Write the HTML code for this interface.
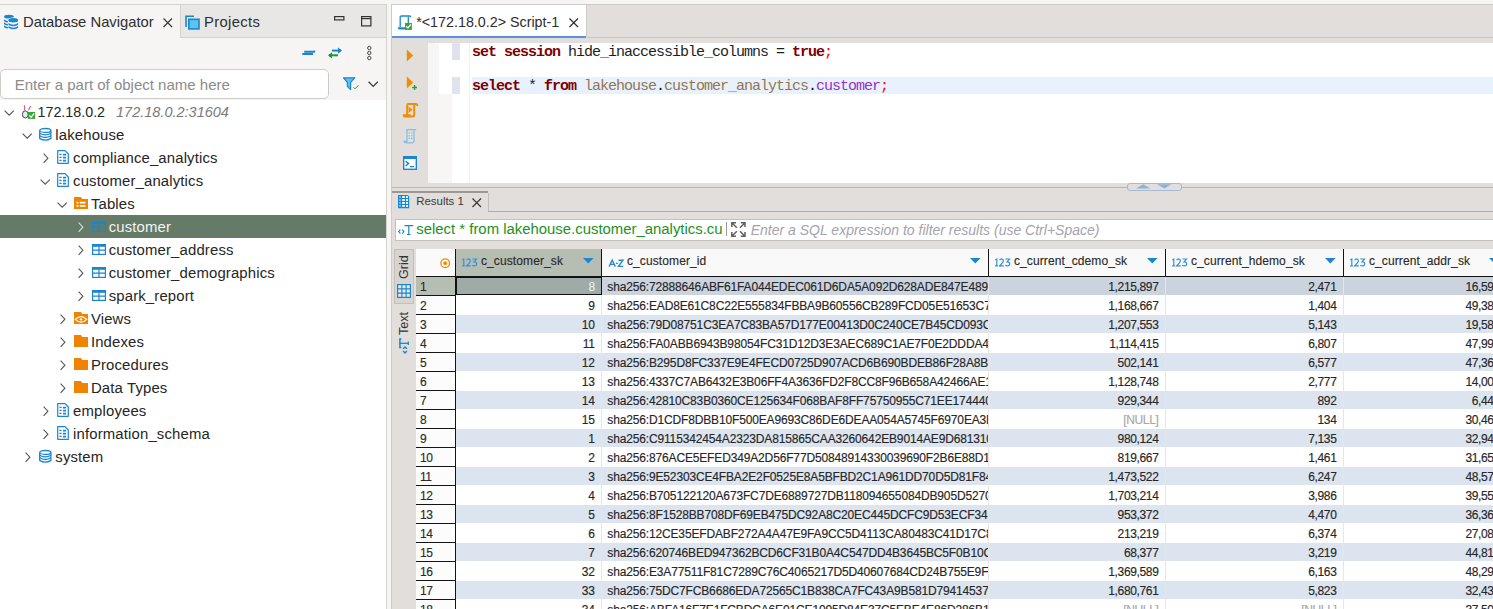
<!DOCTYPE html>
<html><head><meta charset="utf-8">
<style>
*{margin:0;padding:0;box-sizing:border-box}
html,body{width:1493px;height:609px;overflow:hidden;background:#f6f5f4;font-family:"Liberation Sans",sans-serif;color:#2e2e2e;position:relative}
.a{position:absolute}
.t{position:absolute;white-space:pre;line-height:1}
svg{position:absolute;overflow:visible}
.clip{position:absolute;overflow:hidden}
</style></head><body>
<div class="a" style="left:0px;top:0px;width:1493px;height:4px;background:#f6f5f4;"></div>
<div class="a" style="left:0px;top:4px;width:387px;height:1px;background:#d6d2ce;"></div>
<div class="a" style="left:180px;top:5px;width:206px;height:32px;background:#e9e7e5;border-left:1px solid #d6d2ce"></div>
<div class="a" style="left:180px;top:37px;width:206px;height:1px;background:#d6d2ce;"></div>
<div class="a" style="left:386px;top:4px;width:1px;height:605px;background:#d6d2ce;"></div>
<div class="a" style="left:387px;top:0px;width:4px;height:609px;background:#f6f5f4;"></div>
<svg style="left:2px;top:12px;" width="20" height="20" viewBox="0 0 20 20"><g fill="#1a86d0">
<ellipse cx="6.9" cy="4.7" rx="4.9" ry="1.9"/>
<path d="M2 7.6Q4 9 6 9.2V10.6Q4 10.4 2 9.2z"/>
<path d="M2 10.6Q4 12 6 12.2V13.6Q4 13.4 2 12.2z"/>
<path d="M2 13.6Q4 15 6 15.2V16.6Q4 16.4 2 15.2z"/>
</g>
<ellipse cx="11.25" cy="8.3" rx="5.6" ry="2.9" fill="#fff"/>
<ellipse cx="11.25" cy="8.3" rx="4.85" ry="2.2" fill="#1a86d0"/>
<path d="M6.4 11.1Q11.25 14.3 16.1 11.1V12.7Q11.25 15.9 6.4 12.7z" fill="#1a86d0"/>
<path d="M6.4 14.1Q11.25 17.3 16.1 14.1V15.7Q11.25 18.9 6.4 15.7z" fill="#1a86d0"/></svg>
<div class="t" style="left:23px;top:14.77px;font-size:14.8px;color:#2e2e2e;font-family:'Liberation Sans',sans-serif;">Database Navigator</div>
<svg style="left:163px;top:18px;" width="10" height="10" viewBox="0 0 10 10"><path d="M0.5 0.5L9 9M9 0.5L0.5 9" stroke="#3a3a3a" stroke-width="1.2"/></svg>
<svg style="left:185px;top:15px;" width="15" height="15" viewBox="0 0 15 15"><path d="M1 12V1.2H9" stroke="#1a86d0" stroke-width="1.6" fill="none"/>
<rect x="3.8" y="4.3" width="10.2" height="9.6" fill="#5ec2ea" stroke="#1a86d0" stroke-width="1.6"/></svg>
<div class="t" style="left:204px;top:14.77px;font-size:14.8px;color:#2e2e2e;font-family:'Liberation Sans',sans-serif;letter-spacing:0.35px">Projects</div>
<svg style="left:334px;top:16px;" width="11" height="5" viewBox="0 0 11 5"><rect x="0.6" y="0.6" width="9.3" height="3.3" fill="none" stroke="#333" stroke-width="1.2"/></svg>
<svg style="left:361px;top:16px;" width="11" height="11" viewBox="0 0 11 11"><rect x="0.6" y="0.6" width="9.3" height="9.3" fill="none" stroke="#333" stroke-width="1.2"/><path d="M0.6 2.6H9.9" stroke="#333" stroke-width="1.2"/></svg>
<svg style="left:302px;top:50px;" width="14" height="6" viewBox="0 0 14 6"><path d="M0.3 4H11M2.2 1.8H12.6" stroke="#1a86d0" stroke-width="1.9"/><path d="M12.6 0.6V2.4" stroke="#1a86d0" stroke-width="1.3"/></svg>
<svg style="left:327px;top:47px;" width="16" height="12" viewBox="0 0 16 12"><path d="M5 3.6H14" stroke="#1a86d0" stroke-width="2"/><path d="M11 0.5 L15 3.6 L11 6.7z" fill="#1a86d0"/>
<path d="M11 8.3H2" stroke="#10a02a" stroke-width="2"/><path d="M5 5.2 L1 8.3 L5 11.4z" fill="#10a02a"/></svg>
<svg style="left:366px;top:46px;" width="7" height="15" viewBox="0 0 7 15"><circle cx="3.3" cy="2" r="1.7" fill="none" stroke="#444" stroke-width="1"/><circle cx="3.3" cy="7" r="1.7" fill="none" stroke="#444" stroke-width="1"/><circle cx="3.3" cy="12" r="1.7" fill="none" stroke="#444" stroke-width="1"/></svg>
<div class="a" style="left:0px;top:69px;width:329px;height:30px;background:#ffffff;border:1px solid #cfccc8;border-radius:5px"></div>
<div class="t" style="left:14.7px;top:76.80px;font-size:15px;color:#8b8b8b;font-family:'Liberation Sans',sans-serif;">Enter a part of object name here</div>
<svg style="left:343px;top:77px;" width="17" height="14" viewBox="0 0 17 14"><path d="M0.5 0.8H11.8L7.6 5.4V12.6L4.4 9.4V5.4z" fill="#5ec2ea" stroke="#1a86d0" stroke-width="1.2" stroke-linejoin="round"/>
<path d="M10.5 10.3L12 11.8L15.5 8.2" stroke="#10a02a" stroke-width="1" fill="none"/></svg>
<svg style="left:368px;top:81px;" width="11" height="7" viewBox="0 0 11 7"><path d="M0.6 0.8L5.2 5.4L9.8 0.8" stroke="#3c3c3c" stroke-width="1.3" fill="none"/></svg>
<div class="a" style="left:0px;top:100px;width:386px;height:509px;background:#ffffff;"></div>
<div class="a" style="left:0px;top:215px;width:386px;height:23px;background:#657a67;"></div>
<svg style="left:4.0px;top:109.5px;" width="11" height="6" viewBox="0 0 11 6"><path d="M0.6 0.6L5.2 5.2L9.8 0.6" stroke="#555" stroke-width="1.1" fill="none"/></svg>
<svg style="left:22px;top:105px;" width="14" height="15" viewBox="0 0 14 15"><path d="M2.4 0.2L2.6 5.3M8.6 1L6.4 5.3" stroke="#e5539a" stroke-width="1.1"/>
<ellipse cx="3.3" cy="9.4" rx="2.9" ry="3.6" fill="#e6ecee" stroke="#444" stroke-width="1"/>
<rect x="5.9" y="6.9" width="7.2" height="7" fill="#3aa33a"/>
<path d="M7.3 10.4L9.2 12.2L12.2 8.4" stroke="#fff" stroke-width="1.3" fill="none"/></svg>
<div class="t" style="left:37.5px;top:105.30px;font-size:14.3px;color:#262626;font-family:'Liberation Sans',sans-serif;">172.18.0.2</div>
<div class="t" style="left:116px;top:105.13px;font-size:14.5px;color:#7a7a7a;font-family:'Liberation Sans',sans-serif;font-style:italic">172.18.0.2:31604</div>
<svg style="left:21.8px;top:132.5px;" width="11" height="6" viewBox="0 0 11 6"><path d="M0.6 0.6L5.2 5.2L9.8 0.6" stroke="#555" stroke-width="1.1" fill="none"/></svg>
<svg style="left:38.7px;top:128px;" width="13" height="13" viewBox="0 0 13 13"><g fill="none" stroke="#1a86d0" stroke-width="1.3">
<ellipse cx="6.3" cy="2.4" rx="5.6" ry="1.9"/>
<path d="M0.7 2.4V10.4Q6.3 13.9 11.9 10.4V2.4"/>
<path d="M0.7 5.2Q6.3 8.6 11.9 5.2M0.7 7.8Q6.3 11.2 11.9 7.8"/></g></svg>
<div class="t" style="left:55.3px;top:127.79px;font-size:14.9px;color:#262626;font-family:'Liberation Sans',sans-serif;letter-spacing:0.15px">lakehouse</div>
<svg style="left:42.5px;top:153px;" width="6" height="11" viewBox="0 0 6 11"><path d="M0.6 0.6L4.9 5.2L0.6 9.8" stroke="#555" stroke-width="1.1" fill="none"/></svg>
<svg style="left:57.0px;top:150px;" width="13" height="14" viewBox="0 0 13 14"><path d="M0.7 0.7H8L11.3 4V13.3H0.7z" fill="#fff" stroke="#1a86d0" stroke-width="1.2" stroke-linejoin="round"/>
<path d="M2.4 4.4H4.6M2.4 7.4H4.6M2.4 10.4H4.6" stroke="#1a86d0" stroke-width="1.1"/>
<path d="M6 4.6H9.1M6 7.6H9.1M6 10.6H9.1" stroke="#1a86d0" stroke-width="1.8"/></svg>
<div class="t" style="left:73.1px;top:150.79px;font-size:14.9px;color:#262626;font-family:'Liberation Sans',sans-serif;letter-spacing:0.15px">compliance_analytics</div>
<svg style="left:39.6px;top:178.5px;" width="11" height="6" viewBox="0 0 11 6"><path d="M0.6 0.6L5.2 5.2L9.8 0.6" stroke="#555" stroke-width="1.1" fill="none"/></svg>
<svg style="left:57.0px;top:173px;" width="13" height="14" viewBox="0 0 13 14"><path d="M0.7 0.7H8L11.3 4V13.3H0.7z" fill="#fff" stroke="#1a86d0" stroke-width="1.2" stroke-linejoin="round"/>
<path d="M2.4 4.4H4.6M2.4 7.4H4.6M2.4 10.4H4.6" stroke="#1a86d0" stroke-width="1.1"/>
<path d="M6 4.6H9.1M6 7.6H9.1M6 10.6H9.1" stroke="#1a86d0" stroke-width="1.8"/></svg>
<div class="t" style="left:73.1px;top:173.79px;font-size:14.9px;color:#262626;font-family:'Liberation Sans',sans-serif;letter-spacing:0.15px">customer_analytics</div>
<svg style="left:57.4px;top:201.5px;" width="11" height="6" viewBox="0 0 11 6"><path d="M0.6 0.6L5.2 5.2L9.8 0.6" stroke="#555" stroke-width="1.1" fill="none"/></svg>
<svg style="left:74px;top:197px;" width="14" height="12" viewBox="0 0 14 12"><path d="M0 0H6.8L8.4 2.1H14V12H0z" fill="#f08400"/><path d="M2.6 5.6H4.4M5.8 5.6H11.4M2.6 8.8H4.4M5.8 8.8H11.4" stroke="#fff" stroke-width="1.7"/></svg>
<div class="t" style="left:90.9px;top:196.79px;font-size:14.9px;color:#262626;font-family:'Liberation Sans',sans-serif;letter-spacing:0.15px">Tables</div>
<svg style="left:78.1px;top:222px;" width="6" height="11" viewBox="0 0 6 11"><path d="M0.6 0.6L4.9 5.2L0.6 9.8" stroke="#d8ddd8" stroke-width="1.1" fill="none"/></svg>
<svg style="left:92px;top:221px;" width="14" height="11" viewBox="0 0 14 11"><rect x="0.6" y="0.6" width="12.8" height="9.8" fill="none" stroke="#1a86d0" stroke-width="1.2"/>
<rect x="0.6" y="0.6" width="12.8" height="2.2" fill="#1a86d0"/>
<path d="M0.6 6.2H13.4M7 2.6V10.4" stroke="#1a86d0" stroke-width="1.2"/></svg>
<div class="t" style="left:108.7px;top:219.79px;font-size:14.9px;color:#f2f2f2;font-family:'Liberation Sans',sans-serif;letter-spacing:0.15px">customer</div>
<svg style="left:78.1px;top:245px;" width="6" height="11" viewBox="0 0 6 11"><path d="M0.6 0.6L4.9 5.2L0.6 9.8" stroke="#555" stroke-width="1.1" fill="none"/></svg>
<svg style="left:92px;top:244px;" width="14" height="11" viewBox="0 0 14 11"><rect x="0.6" y="0.6" width="12.8" height="9.8" fill="none" stroke="#1a86d0" stroke-width="1.2"/>
<rect x="0.6" y="0.6" width="12.8" height="2.2" fill="#1a86d0"/>
<path d="M0.6 6.2H13.4M7 2.6V10.4" stroke="#1a86d0" stroke-width="1.2"/></svg>
<div class="t" style="left:108.7px;top:242.79px;font-size:14.9px;color:#262626;font-family:'Liberation Sans',sans-serif;letter-spacing:0.15px">customer_address</div>
<svg style="left:78.1px;top:268px;" width="6" height="11" viewBox="0 0 6 11"><path d="M0.6 0.6L4.9 5.2L0.6 9.8" stroke="#555" stroke-width="1.1" fill="none"/></svg>
<svg style="left:92px;top:267px;" width="14" height="11" viewBox="0 0 14 11"><rect x="0.6" y="0.6" width="12.8" height="9.8" fill="none" stroke="#1a86d0" stroke-width="1.2"/>
<rect x="0.6" y="0.6" width="12.8" height="2.2" fill="#1a86d0"/>
<path d="M0.6 6.2H13.4M7 2.6V10.4" stroke="#1a86d0" stroke-width="1.2"/></svg>
<div class="t" style="left:108.7px;top:265.79px;font-size:14.9px;color:#262626;font-family:'Liberation Sans',sans-serif;letter-spacing:0.15px">customer_demographics</div>
<svg style="left:78.1px;top:291px;" width="6" height="11" viewBox="0 0 6 11"><path d="M0.6 0.6L4.9 5.2L0.6 9.8" stroke="#555" stroke-width="1.1" fill="none"/></svg>
<svg style="left:92px;top:290px;" width="14" height="11" viewBox="0 0 14 11"><rect x="0.6" y="0.6" width="12.8" height="9.8" fill="none" stroke="#1a86d0" stroke-width="1.2"/>
<rect x="0.6" y="0.6" width="12.8" height="2.2" fill="#1a86d0"/>
<path d="M0.6 6.2H13.4M7 2.6V10.4" stroke="#1a86d0" stroke-width="1.2"/></svg>
<div class="t" style="left:108.7px;top:288.79px;font-size:14.9px;color:#262626;font-family:'Liberation Sans',sans-serif;letter-spacing:0.15px">spark_report</div>
<svg style="left:60.3px;top:314px;" width="6" height="11" viewBox="0 0 6 11"><path d="M0.6 0.6L4.9 5.2L0.6 9.8" stroke="#555" stroke-width="1.1" fill="none"/></svg>
<svg style="left:74px;top:312px;" width="14" height="12" viewBox="0 0 14 12"><path d="M0 0H6.8L8.4 2.1H14V12H0z" fill="#f08400"/><path d="M1.3 7.4Q7 1.9 12.7 7.4Q7 12.9 1.3 7.4z" fill="none" stroke="#fff" stroke-width="1.3"/><path d="M7 5.6L7.6 6.8L8.8 7.4L7.6 8L7 9.2L6.4 8L5.2 7.4L6.4 6.8z" fill="#fff"/></svg>
<div class="t" style="left:90.9px;top:311.79px;font-size:14.9px;color:#262626;font-family:'Liberation Sans',sans-serif;letter-spacing:0.15px">Views</div>
<svg style="left:60.3px;top:337px;" width="6" height="11" viewBox="0 0 6 11"><path d="M0.6 0.6L4.9 5.2L0.6 9.8" stroke="#555" stroke-width="1.1" fill="none"/></svg>
<svg style="left:74px;top:335px;" width="14" height="12" viewBox="0 0 14 12"><path d="M0 0H6.8L8.4 2.1H14V12H0z" fill="#f08400"/></svg>
<div class="t" style="left:90.9px;top:334.79px;font-size:14.9px;color:#262626;font-family:'Liberation Sans',sans-serif;letter-spacing:0.15px">Indexes</div>
<svg style="left:60.3px;top:360px;" width="6" height="11" viewBox="0 0 6 11"><path d="M0.6 0.6L4.9 5.2L0.6 9.8" stroke="#555" stroke-width="1.1" fill="none"/></svg>
<svg style="left:74px;top:358px;" width="14" height="12" viewBox="0 0 14 12"><path d="M0 0H6.8L8.4 2.1H14V12H0z" fill="#f08400"/></svg>
<div class="t" style="left:90.9px;top:357.79px;font-size:14.9px;color:#262626;font-family:'Liberation Sans',sans-serif;letter-spacing:0.15px">Procedures</div>
<svg style="left:60.3px;top:383px;" width="6" height="11" viewBox="0 0 6 11"><path d="M0.6 0.6L4.9 5.2L0.6 9.8" stroke="#555" stroke-width="1.1" fill="none"/></svg>
<svg style="left:74px;top:381px;" width="14" height="12" viewBox="0 0 14 12"><path d="M0 0H6.8L8.4 2.1H14V12H0z" fill="#f08400"/></svg>
<div class="t" style="left:90.9px;top:380.79px;font-size:14.9px;color:#262626;font-family:'Liberation Sans',sans-serif;letter-spacing:0.15px">Data Types</div>
<svg style="left:42.5px;top:406px;" width="6" height="11" viewBox="0 0 6 11"><path d="M0.6 0.6L4.9 5.2L0.6 9.8" stroke="#555" stroke-width="1.1" fill="none"/></svg>
<svg style="left:57.0px;top:403px;" width="13" height="14" viewBox="0 0 13 14"><path d="M0.7 0.7H8L11.3 4V13.3H0.7z" fill="#fff" stroke="#1a86d0" stroke-width="1.2" stroke-linejoin="round"/>
<path d="M2.4 4.4H4.6M2.4 7.4H4.6M2.4 10.4H4.6" stroke="#1a86d0" stroke-width="1.1"/>
<path d="M6 4.6H9.1M6 7.6H9.1M6 10.6H9.1" stroke="#1a86d0" stroke-width="1.8"/></svg>
<div class="t" style="left:73.1px;top:403.79px;font-size:14.9px;color:#262626;font-family:'Liberation Sans',sans-serif;letter-spacing:0.15px">employees</div>
<svg style="left:42.5px;top:429px;" width="6" height="11" viewBox="0 0 6 11"><path d="M0.6 0.6L4.9 5.2L0.6 9.8" stroke="#555" stroke-width="1.1" fill="none"/></svg>
<svg style="left:57.0px;top:426px;" width="13" height="14" viewBox="0 0 13 14"><path d="M0.7 0.7H8L11.3 4V13.3H0.7z" fill="#fff" stroke="#1a86d0" stroke-width="1.2" stroke-linejoin="round"/>
<path d="M2.4 4.4H4.6M2.4 7.4H4.6M2.4 10.4H4.6" stroke="#1a86d0" stroke-width="1.1"/>
<path d="M6 4.6H9.1M6 7.6H9.1M6 10.6H9.1" stroke="#1a86d0" stroke-width="1.8"/></svg>
<div class="t" style="left:73.1px;top:426.79px;font-size:14.9px;color:#262626;font-family:'Liberation Sans',sans-serif;letter-spacing:0.15px">information_schema</div>
<svg style="left:24.7px;top:452px;" width="6" height="11" viewBox="0 0 6 11"><path d="M0.6 0.6L4.9 5.2L0.6 9.8" stroke="#555" stroke-width="1.1" fill="none"/></svg>
<svg style="left:38.7px;top:450px;" width="13" height="13" viewBox="0 0 13 13"><g fill="none" stroke="#1a86d0" stroke-width="1.3">
<ellipse cx="6.3" cy="2.4" rx="5.6" ry="1.9"/>
<path d="M0.7 2.4V10.4Q6.3 13.9 11.9 10.4V2.4"/>
<path d="M0.7 5.2Q6.3 8.6 11.9 5.2M0.7 7.8Q6.3 11.2 11.9 7.8"/></g></svg>
<div class="t" style="left:55.3px;top:449.79px;font-size:14.9px;color:#262626;font-family:'Liberation Sans',sans-serif;letter-spacing:0.15px">system</div>
<div class="a" style="left:391px;top:4px;width:1px;height:605px;background:#cfcbc7;"></div>
<div class="a" style="left:392px;top:4px;width:1101px;height:1px;background:#d0ccc8;"></div>
<div class="a" style="left:392px;top:5px;width:1101px;height:38px;background:#e1dedb;"></div>
<div class="a" style="left:587px;top:37px;width:906px;height:1px;background:#cbc7c3;"></div>
<div class="a" style="left:392px;top:5px;width:194px;height:31px;background:#ffffff;"></div>
<div class="a" style="left:586px;top:5px;width:1px;height:32px;background:#d0ccc8;"></div>
<div class="a" style="left:392px;top:36px;width:194px;height:2px;background:#5a8de4;"></div>
<svg style="left:397px;top:15px;" width="16" height="16" viewBox="0 0 16 16"><path d="M3.2 12V2.2Q3.2 1 4.4 1H12.5Q13.8 1 13.8 2.3" fill="none" stroke="#1a86d0" stroke-width="1.3"/>
<path d="M11.3 2V8" stroke="#1a86d0" stroke-width="1.3"/>
<path d="M0.6 12.2H8.5V14.6H1.6z" fill="#1a86d0"/>
<rect x="8" y="8" width="6.9" height="6.9" fill="#3aa33a"/>
<path d="M9.2 11.3L10.9 12.9L13.8 9.5" stroke="#fff" stroke-width="1.2" fill="none"/></svg>
<div class="t" style="left:416.2px;top:14.90px;font-size:14.3px;color:#2e2e2e;font-family:'Liberation Sans',sans-serif;">*&lt;172.18.0.2&gt; Script-1</div>
<svg style="left:569px;top:18px;" width="10" height="10" viewBox="0 0 10 10"><path d="M0.5 0.5L9 9M9 0.5L0.5 9" stroke="#2e2e2e" stroke-width="1.2"/></svg>
<div class="a" style="left:392px;top:43px;width:1101px;height:140px;background:#ffffff;"></div>
<div class="a" style="left:392px;top:43px;width:36px;height:140px;background:#e1dedb;"></div>
<div class="a" style="left:428px;top:43px;width:24px;height:140px;background:#f7f6f5;"></div>
<div class="a" style="left:439px;top:43px;width:13px;height:51px;background:#ffffff;"></div>
<div class="a" style="left:452px;top:43px;width:8px;height:17px;background:#e2e2ee;"></div>
<div class="a" style="left:452px;top:77px;width:8px;height:17px;background:#e2e2ee;"></div>
<div class="a" style="left:469px;top:43px;width:1px;height:140px;background:#efefef;"></div>
<div class="a" style="left:472px;top:77px;width:1021px;height:17px;background:#e8f2fe;"></div>
<svg style="left:406px;top:49px;" width="8" height="14" viewBox="0 0 8 14"><path d="M0.8 0.5L7.2 6.5L0.8 12.6z" fill="#f28c00"/></svg>
<svg style="left:406px;top:76px;" width="12" height="15" viewBox="0 0 12 15"><path d="M0.8 0.5L7.2 6.5L0.8 12.6z" fill="#f28c00"/><path d="M6.2 11.5H11M8.6 9V14" stroke="#2ba02b" stroke-width="1.3"/></svg>
<svg style="left:403px;top:103px;" width="15" height="15" viewBox="0 0 15 15"><path d="M4.2 12V2.2Q4.2 1 5.4 1H13.2Q14.2 1 14.2 2.2V3" fill="none" stroke="#f28c00" stroke-width="2"/>
<path d="M11.2 1.5V11.8Q11.2 13.6 9.4 13.6H2.4Q0.8 13.6 0.8 12.2H7.8" fill="none" stroke="#f28c00" stroke-width="2"/>
<path d="M5.6 3.6L9.6 6.8L5.6 10z" fill="#f28c00"/></svg>
<svg style="left:403px;top:129px;" width="14" height="15" viewBox="0 0 14 15"><path d="M3.5 1.6Q4 0.7 5 0.7H13.2" fill="none" stroke="#7bbfe6" stroke-width="1.2"/>
<path d="M4 1V12.3H0.9Q1.6 13.8 3 13.8H9.5Q11 13.8 11 12.3V1.5" fill="none" stroke="#7bbfe6" stroke-width="1.2"/>
<path d="M5.5 4H7M8 4H9.5M5.5 6.7H7M8 6.7H9.5M5.5 9.4H7M8 9.4H9.5" stroke="#7bbfe6" stroke-width="1.1"/></svg>
<svg style="left:403px;top:156px;" width="14" height="14" viewBox="0 0 14 14"><rect x="0.7" y="0.7" width="12.6" height="12.6" fill="#fff" stroke="#1a86d0" stroke-width="1.4"/>
<rect x="0.7" y="0.7" width="12.6" height="2.3" fill="#1a86d0"/>
<path d="M2.6 5.2L5.6 7.6L2.6 10" fill="none" stroke="#1a86d0" stroke-width="1.4"/><path d="M7 10.6H11" stroke="#1a86d0" stroke-width="1.3"/></svg>
<div class="t" style="left:472px;top:45.11px;font-size:15px;color:#7f0000;font-family:'Liberation Mono',monospace;font-weight:bold;letter-spacing:-1px;">set</div>
<div class="t" style="left:496.0px;top:45.11px;font-size:15px;color:#000;font-family:'Liberation Mono',monospace;letter-spacing:-1px;"> </div>
<div class="t" style="left:504.0px;top:45.11px;font-size:15px;color:#7f0000;font-family:'Liberation Mono',monospace;font-weight:bold;letter-spacing:-1px;">session</div>
<div class="t" style="left:560.0px;top:45.11px;font-size:15px;color:#1e1e1e;font-family:'Liberation Mono',monospace;letter-spacing:-1px;"> hide_inaccessible_columns = </div>
<div class="t" style="left:792.0px;top:45.11px;font-size:15px;color:#7f0000;font-family:'Liberation Mono',monospace;font-weight:bold;letter-spacing:-1px;">true</div>
<div class="t" style="left:824.0px;top:45.11px;font-size:15px;color:#ff0000;font-family:'Liberation Mono',monospace;letter-spacing:-1px;">;</div>
<div class="t" style="left:472px;top:79.11px;font-size:15px;color:#7f0000;font-family:'Liberation Mono',monospace;font-weight:bold;letter-spacing:-1px;">select</div>
<div class="t" style="left:520.0px;top:79.11px;font-size:15px;color:#1e1e1e;font-family:'Liberation Mono',monospace;letter-spacing:-1px;"> * </div>
<div class="t" style="left:544.0px;top:79.11px;font-size:15px;color:#7f0000;font-family:'Liberation Mono',monospace;font-weight:bold;letter-spacing:-1px;">from</div>
<div class="t" style="left:576.0px;top:79.11px;font-size:15px;color:#000;font-family:'Liberation Mono',monospace;letter-spacing:-1px;"> </div>
<div class="t" style="left:584.0px;top:79.11px;font-size:15px;color:#93764e;font-family:'Liberation Mono',monospace;letter-spacing:-1px;">lakehouse</div>
<div class="t" style="left:656.0px;top:79.11px;font-size:15px;color:#111111;font-family:'Liberation Mono',monospace;letter-spacing:-1px;">.</div>
<div class="t" style="left:664.0px;top:79.11px;font-size:15px;color:#93764e;font-family:'Liberation Mono',monospace;letter-spacing:-1px;">customer_analytics</div>
<div class="t" style="left:808.0px;top:79.11px;font-size:15px;color:#111111;font-family:'Liberation Mono',monospace;letter-spacing:-1px;">.</div>
<div class="t" style="left:816.0px;top:79.11px;font-size:15px;color:#9a30c8;font-family:'Liberation Mono',monospace;letter-spacing:-1px;">customer</div>
<div class="t" style="left:880.0px;top:79.11px;font-size:15px;color:#ff0000;font-family:'Liberation Mono',monospace;letter-spacing:-1px;">;</div>
<div class="a" style="left:392px;top:183px;width:1101px;height:426px;background:#e1dedb;"></div>
<div class="a" style="left:392px;top:187px;width:735px;height:1px;background:#a3bbd6;"></div>
<div class="a" style="left:1181px;top:187px;width:312px;height:1px;background:#a3bbd6;"></div>
<div class="a" style="left:1127px;top:183px;width:55px;height:8px;background:#e1dedb;border:1px solid #a3bbd6;border-radius:3px"></div>
<svg style="left:1136px;top:184px;" width="37" height="5" viewBox="0 0 37 5"><path d="M0 4.5L7.2 0.3L14.4 4.5z M21 0.3H35.6L28.3 4.5z" fill="#93b1d4"/></svg>
<div class="a" style="left:392px;top:191px;width:96px;height:2px;background:#9b9895;"></div>
<div class="a" style="left:488px;top:193px;width:1px;height:19px;background:#c2bfbb;"></div>
<div class="a" style="left:488px;top:211px;width:1005px;height:1px;background:#b0ada9;"></div>
<svg style="left:398px;top:195px;" width="12" height="14" viewBox="0 0 12 14"><path d="M0 0H9.6L11.2 1.6V13.2H0z" fill="#1a86d0"/><rect x="1" y="1.15" width="2" height="1.8" fill="#6cc8ee"/><rect x="4.1" y="1.15" width="2.8" height="1.8" fill="#fff"/><rect x="8" y="1.15" width="2" height="1.8" fill="#fff"/><rect x="1" y="4.1" width="2" height="1.8" fill="#6cc8ee"/><rect x="4.1" y="4.1" width="2.8" height="1.8" fill="#fff"/><rect x="8" y="4.1" width="2" height="1.8" fill="#fff"/><rect x="1" y="7.05" width="2" height="1.8" fill="#6cc8ee"/><rect x="4.1" y="7.05" width="2.8" height="1.8" fill="#fff"/><rect x="8" y="7.05" width="2" height="1.8" fill="#fff"/><rect x="1" y="10.0" width="2" height="1.8" fill="#6cc8ee"/><rect x="4.1" y="10.0" width="2.8" height="1.8" fill="#fff"/><rect x="8" y="10.0" width="2" height="1.8" fill="#fff"/></svg>
<div class="t" style="left:416.3px;top:196.35px;font-size:11.4px;color:#3a3a3a;font-family:'Liberation Sans',sans-serif;">Results 1</div>
<svg style="left:472px;top:198px;" width="10" height="10" viewBox="0 0 10 10"><path d="M0.5 0.5L9 9M9 0.5L0.5 9" stroke="#3a3a3a" stroke-width="1.2"/></svg>
<div class="a" style="left:395px;top:219px;width:1098px;height:22px;background:#ffffff;border:1px solid #c4c1bd;border-right:none"></div>
<svg style="left:398px;top:225px;" width="16" height="10" viewBox="0 0 16 10"><path d="M2.4 4.6L0.7 6.6L2.4 8.6M4.2 4.6L5.9 6.6L4.2 8.6" fill="none" stroke="#1a86d0" stroke-width="1.1"/>
<path d="M6.5 0.7H15.2M10.8 0.7V9.5M9 9.5H12.6" fill="none" stroke="#1a86d0" stroke-width="1.2"/></svg>
<div class="t" style="left:416.3px;top:221.69px;font-size:14.9px;color:#1e911e;font-family:'Liberation Sans',sans-serif;">select * from lakehouse.customer_analytics.cu</div>
<div class="a" style="left:726px;top:222px;width:1px;height:14px;background:#9a9a9a;"></div>
<svg style="left:731px;top:222px;" width="16" height="16" viewBox="0 0 16 16"><g fill="none" stroke="#606060" stroke-width="1.5">
<path d="M0.8 5V0.8H5M0.8 0.8L5.8 5.8"/><path d="M9.8 0.8H14V5M14 0.8L9 5.8"/>
<path d="M0.8 10V14.2H5M0.8 14.2L5.8 9.2"/><path d="M14 10V14.2H9.8M14 14.2L9 9.2"/></g></svg>
<div class="t" style="left:750.7px;top:222.65px;font-size:14px;color:#a3a3ae;font-family:'Liberation Sans',sans-serif;font-style:italic">Enter a SQL expression to filter results (use Ctrl+Space)</div>
<div class="a" style="left:392px;top:248px;width:24px;height:361px;background:#e1dedb;"></div>
<div class="a" style="left:394px;top:249px;width:20px;height:55px;background:#d8d5d1;border:1px solid #c3c0bc"></div>
<div class="t" style="left:397.5px;top:278.5px;width:28px;height:14px;font-size:12.6px;transform-origin:0 0;transform:rotate(-90deg);color:#333">Grid</div>
<svg style="left:397px;top:284px;" width="14" height="14" viewBox="0 0 14 14"><rect x="0.6" y="0.6" width="12.8" height="12.8" fill="#ebe7e1" stroke="#1a86d0" stroke-width="1.2"/>
<path d="M0.6 4.9H13.4M0.6 9.1H13.4M4.9 0.6V13.4M9.1 0.6V13.4" stroke="#1a86d0" stroke-width="1.1"/></svg>
<div class="t" style="left:397.5px;top:334.5px;width:28px;height:14px;font-size:12.6px;transform-origin:0 0;transform:rotate(-90deg);color:#333">Text</div>
<svg style="left:399px;top:338px;" width="11" height="16" viewBox="0 0 11 16"><path d="M2.3 0.9H0.9V9.6H2.3" fill="none" stroke="#1a86d0" stroke-width="1.5"/>
<path d="M0.9 5.3H9.3" stroke="#1a86d0" stroke-width="1.3"/><path d="M9.3 3.6V7" stroke="#1a86d0" stroke-width="1.2"/>
<path d="M4.1 10.8L6 8.9L7.9 10.8M4.1 13L6 14.9L7.9 13" fill="none" stroke="#1a86d0" stroke-width="1.4"/></svg>
<div class="a" style="left:416px;top:249px;width:1077px;height:360px;background:#ffffff;"></div>
<div class="a" style="left:416px;top:249px;width:39px;height:27px;background:#fafafa;"></div>
<div class="a" style="left:456px;top:249px;width:145px;height:27px;background:#b6beb3;"></div>
<div class="a" style="left:602px;top:249px;width:386px;height:27px;background:#f9f9f9;"></div>
<div class="a" style="left:989px;top:249px;width:176px;height:27px;background:#f9f9f9;"></div>
<div class="a" style="left:1166px;top:249px;width:177px;height:27px;background:#f9f9f9;"></div>
<div class="a" style="left:1344px;top:249px;width:149px;height:27px;background:#f9f9f9;"></div>
<div class="a" style="left:416px;top:276px;width:1077px;height:1px;background:#141414;"></div>
<div class="a" style="left:455px;top:249px;width:1px;height:360px;background:#141414;"></div>
<div class="a" style="left:601px;top:249px;width:1px;height:27px;background:#141414;"></div>
<div class="a" style="left:988px;top:249px;width:1px;height:27px;background:#141414;"></div>
<div class="a" style="left:1165px;top:249px;width:1px;height:27px;background:#141414;"></div>
<div class="a" style="left:1343px;top:249px;width:1px;height:27px;background:#141414;"></div>
<svg style="left:440px;top:258px;" width="11" height="11" viewBox="0 0 11 11"><circle cx="5.2" cy="5.2" r="4.3" fill="none" stroke="#f08a00" stroke-width="1.3"/><circle cx="5.2" cy="5.2" r="1.9" fill="#f08a00"/></svg>
<svg style="left:461px;top:257.5px;" width="17" height="9" viewBox="0 0 17 9"><path d="M1.3 2L2.8 1V7.8M1.1 7.8H3.9M5.6 2.2Q6.3 0.9 7.6 0.9Q9.4 1 9.4 2.7Q9.4 4.2 5.7 7.8H9.8M11.3 1H15.5L13.1 3.8Q15.7 3.8 15.7 5.8Q15.7 7.9 13.4 7.9Q12.1 7.9 11.2 7.2" fill="none" stroke="#3592d8" stroke-width="1.2"/></svg>
<div class="t" style="left:481px;top:255.34px;font-size:12px;color:#2a2a2a;font-family:'Liberation Sans',sans-serif;letter-spacing:0.1px;-webkit-text-stroke-width:0.15px">c_customer_sk</div>
<svg style="left:582.7px;top:257.5px;" width="11" height="6" viewBox="0 0 11 6"><path d="M0 0H10.6L5.3 5.4z" fill="#1a86d0"/></svg>
<svg style="left:608px;top:258.5px;" width="16" height="9" viewBox="0 0 16 9"><path d="M1.1 7.6L4.2 1.1L7.3 7.6M2.7 5.4H5.7M8 4.4H9.8M10.5 1.2H15L10.5 7.4H15.2" fill="none" stroke="#2a8ad4" stroke-width="1.4"/></svg>
<div class="t" style="left:627px;top:255.34px;font-size:12px;color:#2a2a2a;font-family:'Liberation Sans',sans-serif;letter-spacing:0.1px;-webkit-text-stroke-width:0.15px">c_customer_id</div>
<svg style="left:969.7px;top:257.5px;" width="11" height="6" viewBox="0 0 11 6"><path d="M0 0H10.6L5.3 5.4z" fill="#1a86d0"/></svg>
<svg style="left:994px;top:257.5px;" width="17" height="9" viewBox="0 0 17 9"><path d="M1.3 2L2.8 1V7.8M1.1 7.8H3.9M5.6 2.2Q6.3 0.9 7.6 0.9Q9.4 1 9.4 2.7Q9.4 4.2 5.7 7.8H9.8M11.3 1H15.5L13.1 3.8Q15.7 3.8 15.7 5.8Q15.7 7.9 13.4 7.9Q12.1 7.9 11.2 7.2" fill="none" stroke="#3592d8" stroke-width="1.2"/></svg>
<div class="t" style="left:1014px;top:255.34px;font-size:12px;color:#2a2a2a;font-family:'Liberation Sans',sans-serif;letter-spacing:0.1px;-webkit-text-stroke-width:0.15px">c_current_cdemo_sk</div>
<svg style="left:1146.7px;top:257.5px;" width="11" height="6" viewBox="0 0 11 6"><path d="M0 0H10.6L5.3 5.4z" fill="#1a86d0"/></svg>
<svg style="left:1171px;top:257.5px;" width="17" height="9" viewBox="0 0 17 9"><path d="M1.3 2L2.8 1V7.8M1.1 7.8H3.9M5.6 2.2Q6.3 0.9 7.6 0.9Q9.4 1 9.4 2.7Q9.4 4.2 5.7 7.8H9.8M11.3 1H15.5L13.1 3.8Q15.7 3.8 15.7 5.8Q15.7 7.9 13.4 7.9Q12.1 7.9 11.2 7.2" fill="none" stroke="#3592d8" stroke-width="1.2"/></svg>
<div class="t" style="left:1191px;top:255.34px;font-size:12px;color:#2a2a2a;font-family:'Liberation Sans',sans-serif;letter-spacing:0.1px;-webkit-text-stroke-width:0.15px">c_current_hdemo_sk</div>
<svg style="left:1324.7px;top:257.5px;" width="11" height="6" viewBox="0 0 11 6"><path d="M0 0H10.6L5.3 5.4z" fill="#1a86d0"/></svg>
<svg style="left:1349px;top:257.5px;" width="17" height="9" viewBox="0 0 17 9"><path d="M1.3 2L2.8 1V7.8M1.1 7.8H3.9M5.6 2.2Q6.3 0.9 7.6 0.9Q9.4 1 9.4 2.7Q9.4 4.2 5.7 7.8H9.8M11.3 1H15.5L13.1 3.8Q15.7 3.8 15.7 5.8Q15.7 7.9 13.4 7.9Q12.1 7.9 11.2 7.2" fill="none" stroke="#3592d8" stroke-width="1.2"/></svg>
<div class="t" style="left:1369px;top:255.34px;font-size:12px;color:#2a2a2a;font-family:'Liberation Sans',sans-serif;letter-spacing:0.1px;-webkit-text-stroke-width:0.15px">c_current_addr_sk</div>
<svg style="left:1489px;top:257.5px;" width="11" height="6" viewBox="0 0 11 6"><path d="M0 0H10.6L5.3 5.4z" fill="#1a86d0"/></svg>
<div class="a" style="left:456px;top:277px;width:1037px;height:18px;background:#cbd4de;"></div>
<div class="a" style="left:416px;top:277px;width:39px;height:18px;background:#b6beb3;"></div>
<div class="a" style="left:416px;top:295px;width:39px;height:1px;background:#141414;"></div>
<div class="t" style="left:420px;top:280.64px;font-size:12px;color:#2a2a2a;font-family:'Liberation Sans',sans-serif;letter-spacing:-0.5px;-webkit-text-stroke-width:0.15px">1</div>
<div class="a" style="left:601px;top:277px;width:1px;height:19px;background:#e6e6e6;"></div>
<div class="a" style="left:988px;top:277px;width:1px;height:19px;background:#e6e6e6;"></div>
<div class="a" style="left:1165px;top:277px;width:1px;height:19px;background:#e6e6e6;"></div>
<div class="a" style="left:1343px;top:277px;width:1px;height:19px;background:#e6e6e6;"></div>
<div class="clip" style="left:456px;top:277px;width:145px;height:18px">
<div class="t" style="right:6.5px;top:3.64px;font-size:12px;color:#ffffff;letter-spacing:-0.35px;-webkit-text-stroke-width:0.15px">8</div>
</div>
<div class="clip" style="left:602px;top:277px;width:386px;height:18px">
<div class="t" style="left:5.3px;top:3.64px;font-size:12px;color:#262626;font-family:'Liberation Sans',sans-serif;letter-spacing:-0.15px;-webkit-text-stroke:0.15px #262626">sha256:72888646ABF61FA044EDEC061D6DA5A092D628ADE847E4891C</div>
</div>
<div class="clip" style="left:989px;top:277px;width:176px;height:18px">
<div class="t" style="right:6.5px;top:3.64px;font-size:12px;color:#262626;letter-spacing:-0.35px;-webkit-text-stroke-width:0.15px">1,215,897</div>
</div>
<div class="clip" style="left:1166px;top:277px;width:177px;height:18px">
<div class="t" style="right:6.5px;top:3.64px;font-size:12px;color:#262626;letter-spacing:-0.35px;-webkit-text-stroke-width:0.15px">2,471</div>
</div>
<div class="clip" style="left:1344px;top:277px;width:149px;height:18px">
<div class="t" style="right:-7.0px;top:3.64px;font-size:12px;color:#262626;letter-spacing:-0.35px;-webkit-text-stroke-width:0.15px">16,597</div>
</div>
<div class="a" style="left:456px;top:296px;width:1037px;height:18px;background:#ffffff;"></div>
<div class="a" style="left:416px;top:296px;width:39px;height:18px;background:#fcfcfc;"></div>
<div class="a" style="left:416px;top:314px;width:39px;height:1px;background:#141414;"></div>
<div class="t" style="left:420px;top:299.64px;font-size:12px;color:#2a2a2a;font-family:'Liberation Sans',sans-serif;letter-spacing:-0.5px;-webkit-text-stroke-width:0.15px">2</div>
<div class="a" style="left:601px;top:296px;width:1px;height:19px;background:#e6e6e6;"></div>
<div class="a" style="left:988px;top:296px;width:1px;height:19px;background:#e6e6e6;"></div>
<div class="a" style="left:1165px;top:296px;width:1px;height:19px;background:#e6e6e6;"></div>
<div class="a" style="left:1343px;top:296px;width:1px;height:19px;background:#e6e6e6;"></div>
<div class="clip" style="left:456px;top:296px;width:145px;height:18px">
<div class="t" style="right:6.5px;top:3.64px;font-size:12px;color:#262626;letter-spacing:-0.35px;-webkit-text-stroke-width:0.15px">9</div>
</div>
<div class="clip" style="left:602px;top:296px;width:386px;height:18px">
<div class="t" style="left:5.3px;top:3.64px;font-size:12px;color:#262626;font-family:'Liberation Sans',sans-serif;letter-spacing:-0.15px;-webkit-text-stroke:0.15px #262626">sha256:EAD8E61C8C22E555834FBBA9B60556CB289FCD05E51653C71A</div>
</div>
<div class="clip" style="left:989px;top:296px;width:176px;height:18px">
<div class="t" style="right:6.5px;top:3.64px;font-size:12px;color:#262626;letter-spacing:-0.35px;-webkit-text-stroke-width:0.15px">1,168,667</div>
</div>
<div class="clip" style="left:1166px;top:296px;width:177px;height:18px">
<div class="t" style="right:6.5px;top:3.64px;font-size:12px;color:#262626;letter-spacing:-0.35px;-webkit-text-stroke-width:0.15px">1,404</div>
</div>
<div class="clip" style="left:1344px;top:296px;width:149px;height:18px">
<div class="t" style="right:-7.0px;top:3.64px;font-size:12px;color:#262626;letter-spacing:-0.35px;-webkit-text-stroke-width:0.15px">49,385</div>
</div>
<div class="a" style="left:456px;top:315px;width:1037px;height:18px;background:#dce4ef;"></div>
<div class="a" style="left:416px;top:315px;width:39px;height:18px;background:#fcfcfc;"></div>
<div class="a" style="left:416px;top:333px;width:39px;height:1px;background:#141414;"></div>
<div class="t" style="left:420px;top:318.64px;font-size:12px;color:#2a2a2a;font-family:'Liberation Sans',sans-serif;letter-spacing:-0.5px;-webkit-text-stroke-width:0.15px">3</div>
<div class="a" style="left:601px;top:315px;width:1px;height:19px;background:#e6e6e6;"></div>
<div class="a" style="left:988px;top:315px;width:1px;height:19px;background:#e6e6e6;"></div>
<div class="a" style="left:1165px;top:315px;width:1px;height:19px;background:#e6e6e6;"></div>
<div class="a" style="left:1343px;top:315px;width:1px;height:19px;background:#e6e6e6;"></div>
<div class="clip" style="left:456px;top:315px;width:145px;height:18px">
<div class="t" style="right:6.5px;top:3.64px;font-size:12px;color:#262626;letter-spacing:-0.35px;-webkit-text-stroke-width:0.15px">10</div>
</div>
<div class="clip" style="left:602px;top:315px;width:386px;height:18px">
<div class="t" style="left:5.3px;top:3.64px;font-size:12px;color:#262626;font-family:'Liberation Sans',sans-serif;letter-spacing:-0.15px;-webkit-text-stroke:0.15px #262626">sha256:79D08751C3EA7C83BA57D177E00413D0C240CE7B45CD093C4E</div>
</div>
<div class="clip" style="left:989px;top:315px;width:176px;height:18px">
<div class="t" style="right:6.5px;top:3.64px;font-size:12px;color:#262626;letter-spacing:-0.35px;-webkit-text-stroke-width:0.15px">1,207,553</div>
</div>
<div class="clip" style="left:1166px;top:315px;width:177px;height:18px">
<div class="t" style="right:6.5px;top:3.64px;font-size:12px;color:#262626;letter-spacing:-0.35px;-webkit-text-stroke-width:0.15px">5,143</div>
</div>
<div class="clip" style="left:1344px;top:315px;width:149px;height:18px">
<div class="t" style="right:-7.0px;top:3.64px;font-size:12px;color:#262626;letter-spacing:-0.35px;-webkit-text-stroke-width:0.15px">19,581</div>
</div>
<div class="a" style="left:456px;top:334px;width:1037px;height:18px;background:#ffffff;"></div>
<div class="a" style="left:416px;top:334px;width:39px;height:18px;background:#fcfcfc;"></div>
<div class="a" style="left:416px;top:352px;width:39px;height:1px;background:#141414;"></div>
<div class="t" style="left:420px;top:337.64px;font-size:12px;color:#2a2a2a;font-family:'Liberation Sans',sans-serif;letter-spacing:-0.5px;-webkit-text-stroke-width:0.15px">4</div>
<div class="a" style="left:601px;top:334px;width:1px;height:19px;background:#e6e6e6;"></div>
<div class="a" style="left:988px;top:334px;width:1px;height:19px;background:#e6e6e6;"></div>
<div class="a" style="left:1165px;top:334px;width:1px;height:19px;background:#e6e6e6;"></div>
<div class="a" style="left:1343px;top:334px;width:1px;height:19px;background:#e6e6e6;"></div>
<div class="clip" style="left:456px;top:334px;width:145px;height:18px">
<div class="t" style="right:6.5px;top:3.64px;font-size:12px;color:#262626;letter-spacing:-0.35px;-webkit-text-stroke-width:0.15px">11</div>
</div>
<div class="clip" style="left:602px;top:334px;width:386px;height:18px">
<div class="t" style="left:5.3px;top:3.64px;font-size:12px;color:#262626;font-family:'Liberation Sans',sans-serif;letter-spacing:-0.15px;-webkit-text-stroke:0.15px #262626">sha256:FA0ABB6943B98054FC31D12D3E3AEC689C1AE7F0E2DDDA47B</div>
</div>
<div class="clip" style="left:989px;top:334px;width:176px;height:18px">
<div class="t" style="right:6.5px;top:3.64px;font-size:12px;color:#262626;letter-spacing:-0.35px;-webkit-text-stroke-width:0.15px">1,114,415</div>
</div>
<div class="clip" style="left:1166px;top:334px;width:177px;height:18px">
<div class="t" style="right:6.5px;top:3.64px;font-size:12px;color:#262626;letter-spacing:-0.35px;-webkit-text-stroke-width:0.15px">6,807</div>
</div>
<div class="clip" style="left:1344px;top:334px;width:149px;height:18px">
<div class="t" style="right:-7.0px;top:3.64px;font-size:12px;color:#262626;letter-spacing:-0.35px;-webkit-text-stroke-width:0.15px">47,993</div>
</div>
<div class="a" style="left:456px;top:353px;width:1037px;height:18px;background:#dce4ef;"></div>
<div class="a" style="left:416px;top:353px;width:39px;height:18px;background:#fcfcfc;"></div>
<div class="a" style="left:416px;top:371px;width:39px;height:1px;background:#141414;"></div>
<div class="t" style="left:420px;top:356.64px;font-size:12px;color:#2a2a2a;font-family:'Liberation Sans',sans-serif;letter-spacing:-0.5px;-webkit-text-stroke-width:0.15px">5</div>
<div class="a" style="left:601px;top:353px;width:1px;height:19px;background:#e6e6e6;"></div>
<div class="a" style="left:988px;top:353px;width:1px;height:19px;background:#e6e6e6;"></div>
<div class="a" style="left:1165px;top:353px;width:1px;height:19px;background:#e6e6e6;"></div>
<div class="a" style="left:1343px;top:353px;width:1px;height:19px;background:#e6e6e6;"></div>
<div class="clip" style="left:456px;top:353px;width:145px;height:18px">
<div class="t" style="right:6.5px;top:3.64px;font-size:12px;color:#262626;letter-spacing:-0.35px;-webkit-text-stroke-width:0.15px">12</div>
</div>
<div class="clip" style="left:602px;top:353px;width:386px;height:18px">
<div class="t" style="left:5.3px;top:3.64px;font-size:12px;color:#262626;font-family:'Liberation Sans',sans-serif;letter-spacing:-0.15px;-webkit-text-stroke:0.15px #262626">sha256:B295D8FC337E9E4FECD0725D907ACD6B690BDEB86F28A8B2C</div>
</div>
<div class="clip" style="left:989px;top:353px;width:176px;height:18px">
<div class="t" style="right:6.5px;top:3.64px;font-size:12px;color:#262626;letter-spacing:-0.35px;-webkit-text-stroke-width:0.15px">502,141</div>
</div>
<div class="clip" style="left:1166px;top:353px;width:177px;height:18px">
<div class="t" style="right:6.5px;top:3.64px;font-size:12px;color:#262626;letter-spacing:-0.35px;-webkit-text-stroke-width:0.15px">6,577</div>
</div>
<div class="clip" style="left:1344px;top:353px;width:149px;height:18px">
<div class="t" style="right:-7.0px;top:3.64px;font-size:12px;color:#262626;letter-spacing:-0.35px;-webkit-text-stroke-width:0.15px">47,364</div>
</div>
<div class="a" style="left:456px;top:372px;width:1037px;height:18px;background:#ffffff;"></div>
<div class="a" style="left:416px;top:372px;width:39px;height:18px;background:#fcfcfc;"></div>
<div class="a" style="left:416px;top:390px;width:39px;height:1px;background:#141414;"></div>
<div class="t" style="left:420px;top:375.64px;font-size:12px;color:#2a2a2a;font-family:'Liberation Sans',sans-serif;letter-spacing:-0.5px;-webkit-text-stroke-width:0.15px">6</div>
<div class="a" style="left:601px;top:372px;width:1px;height:19px;background:#e6e6e6;"></div>
<div class="a" style="left:988px;top:372px;width:1px;height:19px;background:#e6e6e6;"></div>
<div class="a" style="left:1165px;top:372px;width:1px;height:19px;background:#e6e6e6;"></div>
<div class="a" style="left:1343px;top:372px;width:1px;height:19px;background:#e6e6e6;"></div>
<div class="clip" style="left:456px;top:372px;width:145px;height:18px">
<div class="t" style="right:6.5px;top:3.64px;font-size:12px;color:#262626;letter-spacing:-0.35px;-webkit-text-stroke-width:0.15px">13</div>
</div>
<div class="clip" style="left:602px;top:372px;width:386px;height:18px">
<div class="t" style="left:5.3px;top:3.64px;font-size:12px;color:#262626;font-family:'Liberation Sans',sans-serif;letter-spacing:-0.15px;-webkit-text-stroke:0.15px #262626">sha256:4337C7AB6432E3B06FF4A3636FD2F8CC8F96B658A42466AE1</div>
</div>
<div class="clip" style="left:989px;top:372px;width:176px;height:18px">
<div class="t" style="right:6.5px;top:3.64px;font-size:12px;color:#262626;letter-spacing:-0.35px;-webkit-text-stroke-width:0.15px">1,128,748</div>
</div>
<div class="clip" style="left:1166px;top:372px;width:177px;height:18px">
<div class="t" style="right:6.5px;top:3.64px;font-size:12px;color:#262626;letter-spacing:-0.35px;-webkit-text-stroke-width:0.15px">2,777</div>
</div>
<div class="clip" style="left:1344px;top:372px;width:149px;height:18px">
<div class="t" style="right:-7.0px;top:3.64px;font-size:12px;color:#262626;letter-spacing:-0.35px;-webkit-text-stroke-width:0.15px">14,002</div>
</div>
<div class="a" style="left:456px;top:391px;width:1037px;height:18px;background:#dce4ef;"></div>
<div class="a" style="left:416px;top:391px;width:39px;height:18px;background:#fcfcfc;"></div>
<div class="a" style="left:416px;top:409px;width:39px;height:1px;background:#141414;"></div>
<div class="t" style="left:420px;top:394.64px;font-size:12px;color:#2a2a2a;font-family:'Liberation Sans',sans-serif;letter-spacing:-0.5px;-webkit-text-stroke-width:0.15px">7</div>
<div class="a" style="left:601px;top:391px;width:1px;height:19px;background:#e6e6e6;"></div>
<div class="a" style="left:988px;top:391px;width:1px;height:19px;background:#e6e6e6;"></div>
<div class="a" style="left:1165px;top:391px;width:1px;height:19px;background:#e6e6e6;"></div>
<div class="a" style="left:1343px;top:391px;width:1px;height:19px;background:#e6e6e6;"></div>
<div class="clip" style="left:456px;top:391px;width:145px;height:18px">
<div class="t" style="right:6.5px;top:3.64px;font-size:12px;color:#262626;letter-spacing:-0.35px;-webkit-text-stroke-width:0.15px">14</div>
</div>
<div class="clip" style="left:602px;top:391px;width:386px;height:18px">
<div class="t" style="left:5.3px;top:3.64px;font-size:12px;color:#262626;font-family:'Liberation Sans',sans-serif;letter-spacing:-0.15px;-webkit-text-stroke:0.15px #262626">sha256:42810C83B0360CE125634F068BAF8FF75750955C71EE174440A</div>
</div>
<div class="clip" style="left:989px;top:391px;width:176px;height:18px">
<div class="t" style="right:6.5px;top:3.64px;font-size:12px;color:#262626;letter-spacing:-0.35px;-webkit-text-stroke-width:0.15px">929,344</div>
</div>
<div class="clip" style="left:1166px;top:391px;width:177px;height:18px">
<div class="t" style="right:6.5px;top:3.64px;font-size:12px;color:#262626;letter-spacing:-0.35px;-webkit-text-stroke-width:0.15px">892</div>
</div>
<div class="clip" style="left:1344px;top:391px;width:149px;height:18px">
<div class="t" style="right:-7.0px;top:3.64px;font-size:12px;color:#262626;letter-spacing:-0.35px;-webkit-text-stroke-width:0.15px">6,447</div>
</div>
<div class="a" style="left:456px;top:410px;width:1037px;height:18px;background:#ffffff;"></div>
<div class="a" style="left:416px;top:410px;width:39px;height:18px;background:#fcfcfc;"></div>
<div class="a" style="left:416px;top:428px;width:39px;height:1px;background:#141414;"></div>
<div class="t" style="left:420px;top:413.64px;font-size:12px;color:#2a2a2a;font-family:'Liberation Sans',sans-serif;letter-spacing:-0.5px;-webkit-text-stroke-width:0.15px">8</div>
<div class="a" style="left:601px;top:410px;width:1px;height:19px;background:#e6e6e6;"></div>
<div class="a" style="left:988px;top:410px;width:1px;height:19px;background:#e6e6e6;"></div>
<div class="a" style="left:1165px;top:410px;width:1px;height:19px;background:#e6e6e6;"></div>
<div class="a" style="left:1343px;top:410px;width:1px;height:19px;background:#e6e6e6;"></div>
<div class="clip" style="left:456px;top:410px;width:145px;height:18px">
<div class="t" style="right:6.5px;top:3.64px;font-size:12px;color:#262626;letter-spacing:-0.35px;-webkit-text-stroke-width:0.15px">15</div>
</div>
<div class="clip" style="left:602px;top:410px;width:386px;height:18px">
<div class="t" style="left:5.3px;top:3.64px;font-size:12px;color:#262626;font-family:'Liberation Sans',sans-serif;letter-spacing:-0.15px;-webkit-text-stroke:0.15px #262626">sha256:D1CDF8DBB10F500EA9693C86DE6DEAA054A5745F6970EA3B1</div>
</div>
<div class="clip" style="left:989px;top:410px;width:176px;height:18px">
<div class="t" style="right:6.5px;top:3.64px;font-size:12px;color:#a8a8a8;letter-spacing:-0.35px;-webkit-text-stroke-width:0.15px">[NULL]</div>
</div>
<div class="clip" style="left:1166px;top:410px;width:177px;height:18px">
<div class="t" style="right:6.5px;top:3.64px;font-size:12px;color:#262626;letter-spacing:-0.35px;-webkit-text-stroke-width:0.15px">134</div>
</div>
<div class="clip" style="left:1344px;top:410px;width:149px;height:18px">
<div class="t" style="right:-7.0px;top:3.64px;font-size:12px;color:#262626;letter-spacing:-0.35px;-webkit-text-stroke-width:0.15px">30,468</div>
</div>
<div class="a" style="left:456px;top:429px;width:1037px;height:18px;background:#dce4ef;"></div>
<div class="a" style="left:416px;top:429px;width:39px;height:18px;background:#fcfcfc;"></div>
<div class="a" style="left:416px;top:447px;width:39px;height:1px;background:#141414;"></div>
<div class="t" style="left:420px;top:432.64px;font-size:12px;color:#2a2a2a;font-family:'Liberation Sans',sans-serif;letter-spacing:-0.5px;-webkit-text-stroke-width:0.15px">9</div>
<div class="a" style="left:601px;top:429px;width:1px;height:19px;background:#e6e6e6;"></div>
<div class="a" style="left:988px;top:429px;width:1px;height:19px;background:#e6e6e6;"></div>
<div class="a" style="left:1165px;top:429px;width:1px;height:19px;background:#e6e6e6;"></div>
<div class="a" style="left:1343px;top:429px;width:1px;height:19px;background:#e6e6e6;"></div>
<div class="clip" style="left:456px;top:429px;width:145px;height:18px">
<div class="t" style="right:6.5px;top:3.64px;font-size:12px;color:#262626;letter-spacing:-0.35px;-webkit-text-stroke-width:0.15px">1</div>
</div>
<div class="clip" style="left:602px;top:429px;width:386px;height:18px">
<div class="t" style="left:5.3px;top:3.64px;font-size:12px;color:#262626;font-family:'Liberation Sans',sans-serif;letter-spacing:-0.15px;-webkit-text-stroke:0.15px #262626">sha256:C9115342454A2323DA815865CAA3260642EB9014AE9D681310</div>
</div>
<div class="clip" style="left:989px;top:429px;width:176px;height:18px">
<div class="t" style="right:6.5px;top:3.64px;font-size:12px;color:#262626;letter-spacing:-0.35px;-webkit-text-stroke-width:0.15px">980,124</div>
</div>
<div class="clip" style="left:1166px;top:429px;width:177px;height:18px">
<div class="t" style="right:6.5px;top:3.64px;font-size:12px;color:#262626;letter-spacing:-0.35px;-webkit-text-stroke-width:0.15px">7,135</div>
</div>
<div class="clip" style="left:1344px;top:429px;width:149px;height:18px">
<div class="t" style="right:-7.0px;top:3.64px;font-size:12px;color:#262626;letter-spacing:-0.35px;-webkit-text-stroke-width:0.15px">32,941</div>
</div>
<div class="a" style="left:456px;top:448px;width:1037px;height:18px;background:#ffffff;"></div>
<div class="a" style="left:416px;top:448px;width:39px;height:18px;background:#fcfcfc;"></div>
<div class="a" style="left:416px;top:466px;width:39px;height:1px;background:#141414;"></div>
<div class="t" style="left:420px;top:451.64px;font-size:12px;color:#2a2a2a;font-family:'Liberation Sans',sans-serif;letter-spacing:-0.5px;-webkit-text-stroke-width:0.15px">10</div>
<div class="a" style="left:601px;top:448px;width:1px;height:19px;background:#e6e6e6;"></div>
<div class="a" style="left:988px;top:448px;width:1px;height:19px;background:#e6e6e6;"></div>
<div class="a" style="left:1165px;top:448px;width:1px;height:19px;background:#e6e6e6;"></div>
<div class="a" style="left:1343px;top:448px;width:1px;height:19px;background:#e6e6e6;"></div>
<div class="clip" style="left:456px;top:448px;width:145px;height:18px">
<div class="t" style="right:6.5px;top:3.64px;font-size:12px;color:#262626;letter-spacing:-0.35px;-webkit-text-stroke-width:0.15px">2</div>
</div>
<div class="clip" style="left:602px;top:448px;width:386px;height:18px">
<div class="t" style="left:5.3px;top:3.64px;font-size:12px;color:#262626;font-family:'Liberation Sans',sans-serif;letter-spacing:-0.15px;-webkit-text-stroke:0.15px #262626">sha256:876ACE5EFED349A2D56F77D50848914330039690F2B6E88D1</div>
</div>
<div class="clip" style="left:989px;top:448px;width:176px;height:18px">
<div class="t" style="right:6.5px;top:3.64px;font-size:12px;color:#262626;letter-spacing:-0.35px;-webkit-text-stroke-width:0.15px">819,667</div>
</div>
<div class="clip" style="left:1166px;top:448px;width:177px;height:18px">
<div class="t" style="right:6.5px;top:3.64px;font-size:12px;color:#262626;letter-spacing:-0.35px;-webkit-text-stroke-width:0.15px">1,461</div>
</div>
<div class="clip" style="left:1344px;top:448px;width:149px;height:18px">
<div class="t" style="right:-7.0px;top:3.64px;font-size:12px;color:#262626;letter-spacing:-0.35px;-webkit-text-stroke-width:0.15px">31,652</div>
</div>
<div class="a" style="left:456px;top:467px;width:1037px;height:18px;background:#dce4ef;"></div>
<div class="a" style="left:416px;top:467px;width:39px;height:18px;background:#fcfcfc;"></div>
<div class="a" style="left:416px;top:485px;width:39px;height:1px;background:#141414;"></div>
<div class="t" style="left:420px;top:470.64px;font-size:12px;color:#2a2a2a;font-family:'Liberation Sans',sans-serif;letter-spacing:-0.5px;-webkit-text-stroke-width:0.15px">11</div>
<div class="a" style="left:601px;top:467px;width:1px;height:19px;background:#e6e6e6;"></div>
<div class="a" style="left:988px;top:467px;width:1px;height:19px;background:#e6e6e6;"></div>
<div class="a" style="left:1165px;top:467px;width:1px;height:19px;background:#e6e6e6;"></div>
<div class="a" style="left:1343px;top:467px;width:1px;height:19px;background:#e6e6e6;"></div>
<div class="clip" style="left:456px;top:467px;width:145px;height:18px">
<div class="t" style="right:6.5px;top:3.64px;font-size:12px;color:#262626;letter-spacing:-0.35px;-webkit-text-stroke-width:0.15px">3</div>
</div>
<div class="clip" style="left:602px;top:467px;width:386px;height:18px">
<div class="t" style="left:5.3px;top:3.64px;font-size:12px;color:#262626;font-family:'Liberation Sans',sans-serif;letter-spacing:-0.15px;-webkit-text-stroke:0.15px #262626">sha256:9E52303CE4FBA2E2F0525E8A5BFBD2C1A961DD70D5D81F84A</div>
</div>
<div class="clip" style="left:989px;top:467px;width:176px;height:18px">
<div class="t" style="right:6.5px;top:3.64px;font-size:12px;color:#262626;letter-spacing:-0.35px;-webkit-text-stroke-width:0.15px">1,473,522</div>
</div>
<div class="clip" style="left:1166px;top:467px;width:177px;height:18px">
<div class="t" style="right:6.5px;top:3.64px;font-size:12px;color:#262626;letter-spacing:-0.35px;-webkit-text-stroke-width:0.15px">6,247</div>
</div>
<div class="clip" style="left:1344px;top:467px;width:149px;height:18px">
<div class="t" style="right:-7.0px;top:3.64px;font-size:12px;color:#262626;letter-spacing:-0.35px;-webkit-text-stroke-width:0.15px">48,575</div>
</div>
<div class="a" style="left:456px;top:486px;width:1037px;height:18px;background:#ffffff;"></div>
<div class="a" style="left:416px;top:486px;width:39px;height:18px;background:#fcfcfc;"></div>
<div class="a" style="left:416px;top:504px;width:39px;height:1px;background:#141414;"></div>
<div class="t" style="left:420px;top:489.64px;font-size:12px;color:#2a2a2a;font-family:'Liberation Sans',sans-serif;letter-spacing:-0.5px;-webkit-text-stroke-width:0.15px">12</div>
<div class="a" style="left:601px;top:486px;width:1px;height:19px;background:#e6e6e6;"></div>
<div class="a" style="left:988px;top:486px;width:1px;height:19px;background:#e6e6e6;"></div>
<div class="a" style="left:1165px;top:486px;width:1px;height:19px;background:#e6e6e6;"></div>
<div class="a" style="left:1343px;top:486px;width:1px;height:19px;background:#e6e6e6;"></div>
<div class="clip" style="left:456px;top:486px;width:145px;height:18px">
<div class="t" style="right:6.5px;top:3.64px;font-size:12px;color:#262626;letter-spacing:-0.35px;-webkit-text-stroke-width:0.15px">4</div>
</div>
<div class="clip" style="left:602px;top:486px;width:386px;height:18px">
<div class="t" style="left:5.3px;top:3.64px;font-size:12px;color:#262626;font-family:'Liberation Sans',sans-serif;letter-spacing:-0.15px;-webkit-text-stroke:0.15px #262626">sha256:B705122120A673FC7DE6889727DB118094655084DB905D5270</div>
</div>
<div class="clip" style="left:989px;top:486px;width:176px;height:18px">
<div class="t" style="right:6.5px;top:3.64px;font-size:12px;color:#262626;letter-spacing:-0.35px;-webkit-text-stroke-width:0.15px">1,703,214</div>
</div>
<div class="clip" style="left:1166px;top:486px;width:177px;height:18px">
<div class="t" style="right:6.5px;top:3.64px;font-size:12px;color:#262626;letter-spacing:-0.35px;-webkit-text-stroke-width:0.15px">3,986</div>
</div>
<div class="clip" style="left:1344px;top:486px;width:149px;height:18px">
<div class="t" style="right:-7.0px;top:3.64px;font-size:12px;color:#262626;letter-spacing:-0.35px;-webkit-text-stroke-width:0.15px">39,551</div>
</div>
<div class="a" style="left:456px;top:505px;width:1037px;height:18px;background:#dce4ef;"></div>
<div class="a" style="left:416px;top:505px;width:39px;height:18px;background:#fcfcfc;"></div>
<div class="a" style="left:416px;top:523px;width:39px;height:1px;background:#141414;"></div>
<div class="t" style="left:420px;top:508.64px;font-size:12px;color:#2a2a2a;font-family:'Liberation Sans',sans-serif;letter-spacing:-0.5px;-webkit-text-stroke-width:0.15px">13</div>
<div class="a" style="left:601px;top:505px;width:1px;height:19px;background:#e6e6e6;"></div>
<div class="a" style="left:988px;top:505px;width:1px;height:19px;background:#e6e6e6;"></div>
<div class="a" style="left:1165px;top:505px;width:1px;height:19px;background:#e6e6e6;"></div>
<div class="a" style="left:1343px;top:505px;width:1px;height:19px;background:#e6e6e6;"></div>
<div class="clip" style="left:456px;top:505px;width:145px;height:18px">
<div class="t" style="right:6.5px;top:3.64px;font-size:12px;color:#262626;letter-spacing:-0.35px;-webkit-text-stroke-width:0.15px">5</div>
</div>
<div class="clip" style="left:602px;top:505px;width:386px;height:18px">
<div class="t" style="left:5.3px;top:3.64px;font-size:12px;color:#262626;font-family:'Liberation Sans',sans-serif;letter-spacing:-0.15px;-webkit-text-stroke:0.15px #262626">sha256:8F1528BB708DF69EB475DC92A8C20EC445DCFC9D53ECF34E</div>
</div>
<div class="clip" style="left:989px;top:505px;width:176px;height:18px">
<div class="t" style="right:6.5px;top:3.64px;font-size:12px;color:#262626;letter-spacing:-0.35px;-webkit-text-stroke-width:0.15px">953,372</div>
</div>
<div class="clip" style="left:1166px;top:505px;width:177px;height:18px">
<div class="t" style="right:6.5px;top:3.64px;font-size:12px;color:#262626;letter-spacing:-0.35px;-webkit-text-stroke-width:0.15px">4,470</div>
</div>
<div class="clip" style="left:1344px;top:505px;width:149px;height:18px">
<div class="t" style="right:-7.0px;top:3.64px;font-size:12px;color:#262626;letter-spacing:-0.35px;-webkit-text-stroke-width:0.15px">36,362</div>
</div>
<div class="a" style="left:456px;top:524px;width:1037px;height:18px;background:#ffffff;"></div>
<div class="a" style="left:416px;top:524px;width:39px;height:18px;background:#fcfcfc;"></div>
<div class="a" style="left:416px;top:542px;width:39px;height:1px;background:#141414;"></div>
<div class="t" style="left:420px;top:527.64px;font-size:12px;color:#2a2a2a;font-family:'Liberation Sans',sans-serif;letter-spacing:-0.5px;-webkit-text-stroke-width:0.15px">14</div>
<div class="a" style="left:601px;top:524px;width:1px;height:19px;background:#e6e6e6;"></div>
<div class="a" style="left:988px;top:524px;width:1px;height:19px;background:#e6e6e6;"></div>
<div class="a" style="left:1165px;top:524px;width:1px;height:19px;background:#e6e6e6;"></div>
<div class="a" style="left:1343px;top:524px;width:1px;height:19px;background:#e6e6e6;"></div>
<div class="clip" style="left:456px;top:524px;width:145px;height:18px">
<div class="t" style="right:6.5px;top:3.64px;font-size:12px;color:#262626;letter-spacing:-0.35px;-webkit-text-stroke-width:0.15px">6</div>
</div>
<div class="clip" style="left:602px;top:524px;width:386px;height:18px">
<div class="t" style="left:5.3px;top:3.64px;font-size:12px;color:#262626;font-family:'Liberation Sans',sans-serif;letter-spacing:-0.15px;-webkit-text-stroke:0.15px #262626">sha256:12CE35EFDABF272A4A47E9FA9CC5D4113CA80483C41D17C8B</div>
</div>
<div class="clip" style="left:989px;top:524px;width:176px;height:18px">
<div class="t" style="right:6.5px;top:3.64px;font-size:12px;color:#262626;letter-spacing:-0.35px;-webkit-text-stroke-width:0.15px">213,219</div>
</div>
<div class="clip" style="left:1166px;top:524px;width:177px;height:18px">
<div class="t" style="right:6.5px;top:3.64px;font-size:12px;color:#262626;letter-spacing:-0.35px;-webkit-text-stroke-width:0.15px">6,374</div>
</div>
<div class="clip" style="left:1344px;top:524px;width:149px;height:18px">
<div class="t" style="right:-7.0px;top:3.64px;font-size:12px;color:#262626;letter-spacing:-0.35px;-webkit-text-stroke-width:0.15px">27,084</div>
</div>
<div class="a" style="left:456px;top:543px;width:1037px;height:18px;background:#dce4ef;"></div>
<div class="a" style="left:416px;top:543px;width:39px;height:18px;background:#fcfcfc;"></div>
<div class="a" style="left:416px;top:561px;width:39px;height:1px;background:#141414;"></div>
<div class="t" style="left:420px;top:546.64px;font-size:12px;color:#2a2a2a;font-family:'Liberation Sans',sans-serif;letter-spacing:-0.5px;-webkit-text-stroke-width:0.15px">15</div>
<div class="a" style="left:601px;top:543px;width:1px;height:19px;background:#e6e6e6;"></div>
<div class="a" style="left:988px;top:543px;width:1px;height:19px;background:#e6e6e6;"></div>
<div class="a" style="left:1165px;top:543px;width:1px;height:19px;background:#e6e6e6;"></div>
<div class="a" style="left:1343px;top:543px;width:1px;height:19px;background:#e6e6e6;"></div>
<div class="clip" style="left:456px;top:543px;width:145px;height:18px">
<div class="t" style="right:6.5px;top:3.64px;font-size:12px;color:#262626;letter-spacing:-0.35px;-webkit-text-stroke-width:0.15px">7</div>
</div>
<div class="clip" style="left:602px;top:543px;width:386px;height:18px">
<div class="t" style="left:5.3px;top:3.64px;font-size:12px;color:#262626;font-family:'Liberation Sans',sans-serif;letter-spacing:-0.15px;-webkit-text-stroke:0.15px #262626">sha256:620746BED947362BCD6CF31B0A4C547DD4B3645BC5F0B10C</div>
</div>
<div class="clip" style="left:989px;top:543px;width:176px;height:18px">
<div class="t" style="right:6.5px;top:3.64px;font-size:12px;color:#262626;letter-spacing:-0.35px;-webkit-text-stroke-width:0.15px">68,377</div>
</div>
<div class="clip" style="left:1166px;top:543px;width:177px;height:18px">
<div class="t" style="right:6.5px;top:3.64px;font-size:12px;color:#262626;letter-spacing:-0.35px;-webkit-text-stroke-width:0.15px">3,219</div>
</div>
<div class="clip" style="left:1344px;top:543px;width:149px;height:18px">
<div class="t" style="right:-7.0px;top:3.64px;font-size:12px;color:#262626;letter-spacing:-0.35px;-webkit-text-stroke-width:0.15px">44,812</div>
</div>
<div class="a" style="left:456px;top:562px;width:1037px;height:18px;background:#ffffff;"></div>
<div class="a" style="left:416px;top:562px;width:39px;height:18px;background:#fcfcfc;"></div>
<div class="a" style="left:416px;top:580px;width:39px;height:1px;background:#141414;"></div>
<div class="t" style="left:420px;top:565.64px;font-size:12px;color:#2a2a2a;font-family:'Liberation Sans',sans-serif;letter-spacing:-0.5px;-webkit-text-stroke-width:0.15px">16</div>
<div class="a" style="left:601px;top:562px;width:1px;height:19px;background:#e6e6e6;"></div>
<div class="a" style="left:988px;top:562px;width:1px;height:19px;background:#e6e6e6;"></div>
<div class="a" style="left:1165px;top:562px;width:1px;height:19px;background:#e6e6e6;"></div>
<div class="a" style="left:1343px;top:562px;width:1px;height:19px;background:#e6e6e6;"></div>
<div class="clip" style="left:456px;top:562px;width:145px;height:18px">
<div class="t" style="right:6.5px;top:3.64px;font-size:12px;color:#262626;letter-spacing:-0.35px;-webkit-text-stroke-width:0.15px">32</div>
</div>
<div class="clip" style="left:602px;top:562px;width:386px;height:18px">
<div class="t" style="left:5.3px;top:3.64px;font-size:12px;color:#262626;font-family:'Liberation Sans',sans-serif;letter-spacing:-0.15px;-webkit-text-stroke:0.15px #262626">sha256:E3A77511F81C7289C76C4065217D5D40607684CD24B755E9F2</div>
</div>
<div class="clip" style="left:989px;top:562px;width:176px;height:18px">
<div class="t" style="right:6.5px;top:3.64px;font-size:12px;color:#262626;letter-spacing:-0.35px;-webkit-text-stroke-width:0.15px">1,369,589</div>
</div>
<div class="clip" style="left:1166px;top:562px;width:177px;height:18px">
<div class="t" style="right:6.5px;top:3.64px;font-size:12px;color:#262626;letter-spacing:-0.35px;-webkit-text-stroke-width:0.15px">6,163</div>
</div>
<div class="clip" style="left:1344px;top:562px;width:149px;height:18px">
<div class="t" style="right:-7.0px;top:3.64px;font-size:12px;color:#262626;letter-spacing:-0.35px;-webkit-text-stroke-width:0.15px">48,293</div>
</div>
<div class="a" style="left:456px;top:581px;width:1037px;height:18px;background:#dce4ef;"></div>
<div class="a" style="left:416px;top:581px;width:39px;height:18px;background:#fcfcfc;"></div>
<div class="a" style="left:416px;top:599px;width:39px;height:1px;background:#141414;"></div>
<div class="t" style="left:420px;top:584.64px;font-size:12px;color:#2a2a2a;font-family:'Liberation Sans',sans-serif;letter-spacing:-0.5px;-webkit-text-stroke-width:0.15px">17</div>
<div class="a" style="left:601px;top:581px;width:1px;height:19px;background:#e6e6e6;"></div>
<div class="a" style="left:988px;top:581px;width:1px;height:19px;background:#e6e6e6;"></div>
<div class="a" style="left:1165px;top:581px;width:1px;height:19px;background:#e6e6e6;"></div>
<div class="a" style="left:1343px;top:581px;width:1px;height:19px;background:#e6e6e6;"></div>
<div class="clip" style="left:456px;top:581px;width:145px;height:18px">
<div class="t" style="right:6.5px;top:3.64px;font-size:12px;color:#262626;letter-spacing:-0.35px;-webkit-text-stroke-width:0.15px">33</div>
</div>
<div class="clip" style="left:602px;top:581px;width:386px;height:18px">
<div class="t" style="left:5.3px;top:3.64px;font-size:12px;color:#262626;font-family:'Liberation Sans',sans-serif;letter-spacing:-0.15px;-webkit-text-stroke:0.15px #262626">sha256:75DC7FCB6686EDA72565C1B838CA7FC43A9B581D79414537A</div>
</div>
<div class="clip" style="left:989px;top:581px;width:176px;height:18px">
<div class="t" style="right:6.5px;top:3.64px;font-size:12px;color:#262626;letter-spacing:-0.35px;-webkit-text-stroke-width:0.15px">1,680,761</div>
</div>
<div class="clip" style="left:1166px;top:581px;width:177px;height:18px">
<div class="t" style="right:6.5px;top:3.64px;font-size:12px;color:#262626;letter-spacing:-0.35px;-webkit-text-stroke-width:0.15px">5,823</div>
</div>
<div class="clip" style="left:1344px;top:581px;width:149px;height:18px">
<div class="t" style="right:-7.0px;top:3.64px;font-size:12px;color:#262626;letter-spacing:-0.35px;-webkit-text-stroke-width:0.15px">32,437</div>
</div>
<div class="a" style="left:456px;top:600px;width:1037px;height:18px;background:#ffffff;"></div>
<div class="a" style="left:416px;top:600px;width:39px;height:18px;background:#fcfcfc;"></div>
<div class="a" style="left:416px;top:618px;width:39px;height:1px;background:#141414;"></div>
<div class="t" style="left:420px;top:603.64px;font-size:12px;color:#2a2a2a;font-family:'Liberation Sans',sans-serif;letter-spacing:-0.5px;-webkit-text-stroke-width:0.15px">18</div>
<div class="a" style="left:601px;top:600px;width:1px;height:19px;background:#e6e6e6;"></div>
<div class="a" style="left:988px;top:600px;width:1px;height:19px;background:#e6e6e6;"></div>
<div class="a" style="left:1165px;top:600px;width:1px;height:19px;background:#e6e6e6;"></div>
<div class="a" style="left:1343px;top:600px;width:1px;height:19px;background:#e6e6e6;"></div>
<div class="clip" style="left:456px;top:600px;width:145px;height:18px">
<div class="t" style="right:6.5px;top:3.64px;font-size:12px;color:#262626;letter-spacing:-0.35px;-webkit-text-stroke-width:0.15px">34</div>
</div>
<div class="clip" style="left:602px;top:600px;width:386px;height:18px">
<div class="t" style="left:5.3px;top:3.64px;font-size:12px;color:#262626;font-family:'Liberation Sans',sans-serif;letter-spacing:-0.15px;-webkit-text-stroke:0.15px #262626">sha256:ABFA16F7E1FCBDCA6E01CE1095D84E37C5EBE4E86D286B15</div>
</div>
<div class="clip" style="left:989px;top:600px;width:176px;height:18px">
<div class="t" style="right:6.5px;top:3.64px;font-size:12px;color:#a8a8a8;letter-spacing:-0.35px;-webkit-text-stroke-width:0.15px">[NULL]</div>
</div>
<div class="clip" style="left:1166px;top:600px;width:177px;height:18px">
<div class="t" style="right:6.5px;top:3.64px;font-size:12px;color:#a8a8a8;letter-spacing:-0.35px;-webkit-text-stroke-width:0.15px">[NULL]</div>
</div>
<div class="clip" style="left:1344px;top:600px;width:149px;height:18px">
<div class="t" style="right:-7.0px;top:3.64px;font-size:12px;color:#262626;letter-spacing:-0.35px;-webkit-text-stroke-width:0.15px">37,509</div>
</div>
<div class="a" style="left:455px;top:276px;width:147px;height:19px;background:#9eaba7;border:2px solid #111;border-bottom-width:1.5px;border-right-width:1.5px"></div>
<div class="t" style="left:588.5px;top:280.64px;font-size:12px;color:#f4f4f4;font-family:'Liberation Sans',sans-serif;">8</div></body></html>
